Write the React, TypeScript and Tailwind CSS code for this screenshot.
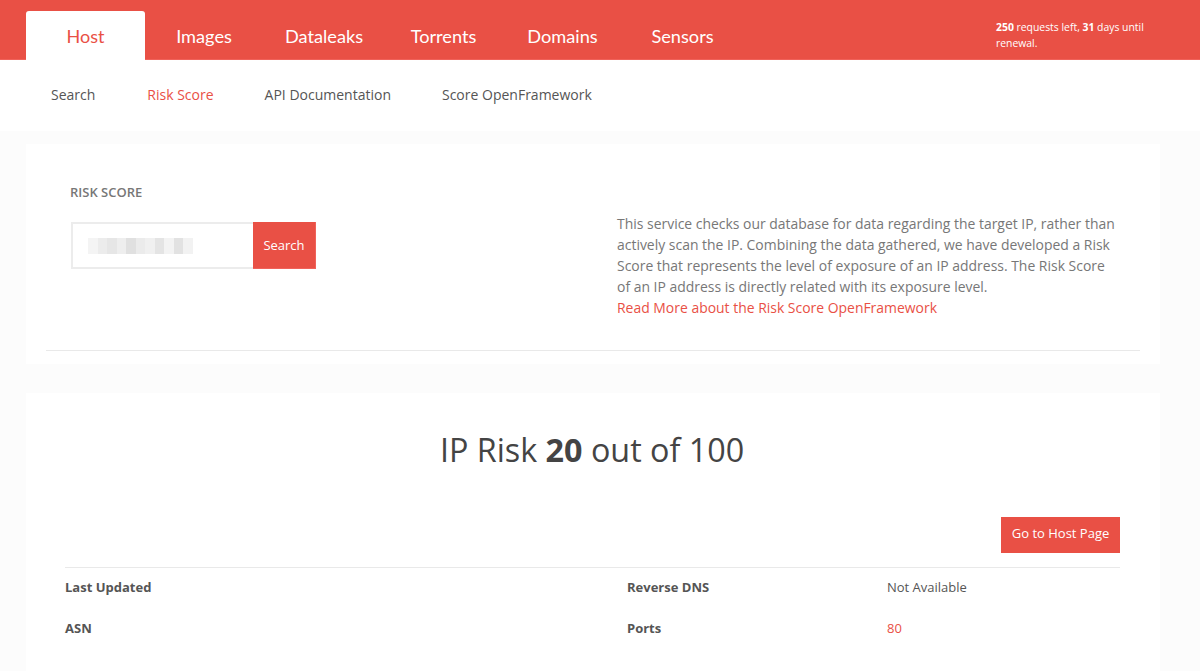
const OS = "font-['Open_Sans',sans-serif]";

const tabs = [
  { label: "Images", w: "w-[118px]" },
  { label: "Dataleaks", w: "w-[122px]" },
  { label: "Torrents", w: "w-[117px]" },
  { label: "Domains", w: "w-[121px]" },
  { label: "Sensors", w: "w-[119px]" },
];

const mosaic = ["#f4f4f4","#ececec","#e6e6e6","#eeeeee","#e0e0e0","#ebebeb","#f0f0f0","#e4e4e4","#f3f3f3","#e2e2e2","#f2f2f2"];

export default function App() {
  return (
    <div className={`w-[1200px] h-[671px] overflow-hidden bg-[#fcfcfc] ${OS} text-[#555]`}>
      <header className="h-[60px] bg-[#e95045] border-b border-[#f0625a] flex relative">
        <div className="ml-[26px] mt-[11px] w-[119px] h-[49px] bg-white rounded-t-[3px] flex items-center justify-center text-[#e95045] text-[18px] font-['Lato',sans-serif] pt-[1px]">
          Host
        </div>
        <nav className="flex text-white text-[18.2px] font-['Lato',sans-serif]">
          {tabs.map((t) => (
            <div key={t.label} className={`${t.w} h-[59px] pt-[24px] leading-[24px] text-center`}>
              {t.label}
            </div>
          ))}
        </nav>
        <div className="absolute left-[996px] top-[19px] w-[170px] text-[10.4px] leading-[16px] text-white">
          <b>250</b> requests left, <b>31</b> days until renewal.
        </div>
      </header>

      <div className="h-[71px] bg-white flex items-center pl-[51px] pb-[2px] text-[14px] text-[#555]">
        <span className="mr-[52px]">Search</span>
        <span className="mr-[51px] text-[#e95045]">Risk Score</span>
        <span className="mr-[51px]">API Documentation</span>
        <span>Score OpenFramework</span>
      </div>

      <main className="mx-[26px] w-[1134px]">
        <section className="mt-[13px] h-[220px] bg-white px-[20px] pt-[40px]">
          <div className="flex h-[167px] border-b border-[#e9e9e9] pl-[24px]">
            <div className="w-[547px] shrink-0">
              <h2 className="text-[13px] leading-[16px] font-semibold text-[#777]">RISK SCORE</h2>
              <div className="mt-[22px] ml-[1px] flex w-[245px] h-[47px]">
                <div className="w-[182px] border-2 border-r-0 border-[#ececec] bg-white flex items-center pl-[15px]">
                  <div className="flex blur-[0.5px]">
                    {mosaic.map((c, i) => (
                      <div key={i} className="w-[9.5px] h-[16px]" style={{ backgroundColor: c }} />
                    ))}
                  </div>
                </div>
                <div className="w-[63px] bg-[#e95045] border-r border-b border-[#f0625a] text-white text-[13px] flex items-center justify-center pt-[1px]">
                  Search
                </div>
              </div>
            </div>
            <div className="pt-[29px] text-[13.95px] leading-[21px] text-[#777] w-[502px] shrink-0">
              <p>
                This service checks our database for data regarding the target IP, rather than actively scan the IP. Combining the data gathered, we have developed a Risk Score that represents the level of exposure of an IP address. The Risk Score of an IP address is directly related with its exposure level.
              </p>
              <span className="text-[#e95045]">Read More about the Risk Score OpenFramework</span>
            </div>
          </div>
        </section>

        <section className="mt-[29px] h-[300px] bg-white pl-[39px] pr-[40px]">
          <h1 className="pt-[34px] text-center text-[32.3px] leading-[44px] text-[#444] pr-[1px]">
            IP Risk <b className="font-bold">20</b> out of 100
          </h1>
          <div className="mt-[46px] flex justify-end">
            <div className="w-[119px] h-[36px] bg-[#e95045] text-white text-[13px] flex items-center justify-center pb-[2px]">
              Go to Host Page
            </div>
          </div>
          <div className="mt-[14px] border-t border-[#e9e9e9] text-[13px]">
            <div className="flex h-[40px] items-center">
              <div className="w-[562px] font-bold text-[#555]">Last Updated</div>
              <div className="w-[260px] font-bold text-[#555]">Reverse DNS</div>
              <div>Not Available</div>
            </div>
            <div className="flex h-[41px] items-center pt-[1px]">
              <div className="w-[562px] font-bold text-[#555]">ASN</div>
              <div className="w-[260px] font-bold text-[#555]">Ports</div>
              <div className="text-[#e95045]">80</div>
            </div>
          </div>
        </section>
      </main>
    </div>
  );
}
